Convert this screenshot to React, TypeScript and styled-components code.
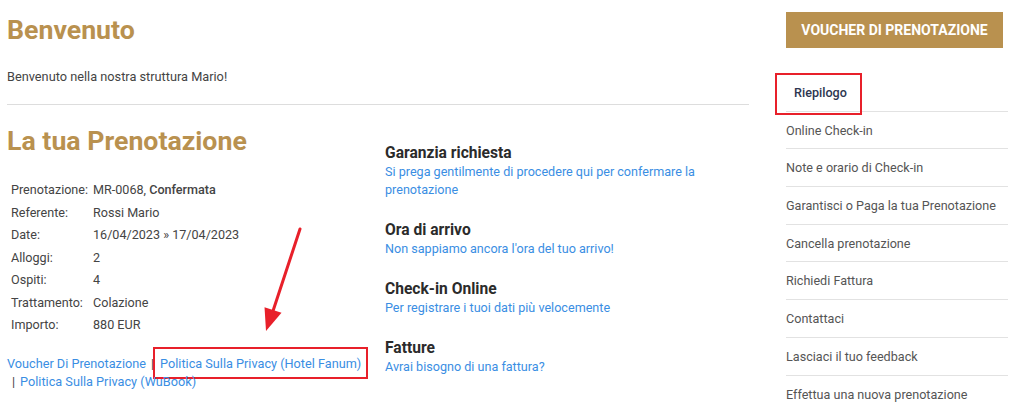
import React from "react";
import styled, { createGlobalStyle, css } from "styled-components";

const gold = "#b9914f";
const link = "#3a8ee3";
const annot = "#e8202a";

const GlobalStyle = createGlobalStyle`
  html, body {
    margin: 0;
    padding: 0;
    background: #fff;
    font-family: Roboto, "Liberation Sans", Arial, sans-serif;
    color: #444;
  }
`;

const Page = styled.div`
  position: relative;
  display: flex;
  align-items: flex-start;
  gap: 37px;
  padding: 12px 12px 0 7px;
  width: 1020px;
  height: 417px;
  box-sizing: border-box;
  overflow: hidden;
`;

const Main = styled.div`
  width: 742px;
  flex: none;
`;

const Title = styled.h1`
  margin: 1px 0 0;
  font-size: 26.7px;
  line-height: 34px;
  font-weight: 700;
  color: ${gold};
`;

const Welcome = styled.p`
  margin: 22px 0 0;
  font-size: 12.75px;
  line-height: 16px;
  color: #444;
`;

const Divider = styled.hr`
  margin: 19px 0 0;
  border: 0;
  border-top: 1px solid #ddd;
`;

const Columns = styled.div`
  display: grid;
  grid-template-columns: 378px 1fr;
`;

const Booking = styled.div`
  padding-top: 18px;
`;

const DetailTable = styled.table`
  margin: 21px 0 0 4px;
  border-collapse: collapse;
  font-size: 12.6px;
  color: #444;

  td {
    padding: 0;
    height: 22.5px;
    line-height: 22.5px;
    white-space: nowrap;
  }
  td:first-child {
    width: 82px;
  }
`;

const Strong = styled.span`
  font-weight: 500;
`;

const Links = styled.div`
  margin-top: 18px;
  font-size: 12.7px;
  line-height: 18px;
  color: #444;
`;

const Sep = styled.span<{ $lead?: boolean }>`
  margin: ${(p) => (p.$lead ? "0 5px 0 5px" : "0 6px 0 5px")};
`;

const A = styled.a<{ $marked?: boolean }>`
  position: relative;
  color: ${link};
  text-decoration: none;
  ${(p) =>
    p.$marked &&
    css`
      &::after {
        content: "";
        position: absolute;
        left: -7px;
        right: -7px;
        top: -9px;
        bottom: -8px;
        border: 2px solid ${annot};
      }
    `}
`;

const Actions = styled.div`
  padding-top: 38px;
`;

const Action = styled.div`
  margin-bottom: 21px;
`;

const ActionTitle = styled.h3`
  margin: 0;
  font-size: 15.6px;
  line-height: 20px;
  font-weight: 700;
  color: #2b2b2b;
`;

const ActionText = styled.a`
  display: block;
  font-size: 12.6px;
  line-height: 18px;
  color: ${link};
  text-decoration: none;
  width: 330px;
`;

const Sidebar = styled.aside`
  width: 222px;
  flex: none;
`;

const VoucherButton = styled.button`
  display: block;
  width: 217px;
  height: 36px;
  border: 0;
  background: ${gold};
  color: #fff;
  font-family: Roboto, "Liberation Sans", Arial, sans-serif;
  font-size: 14px;
  font-weight: 700;
  text-transform: uppercase;
  cursor: pointer;
`;

const Menu = styled.ul`
  list-style: none;
  margin: 26px 0 0;
  padding: 0;
`;

const MenuItem = styled.li<{ $active?: boolean }>`
  position: relative;
  display: flex;
  align-items: center;
  height: 37.7px;
  box-sizing: border-box;
  font-size: 12.6px;
  color: #555;
  border-bottom: 1px solid #e2e2e2;
  &:last-child {
    border-bottom: 0;
  }
  ${(p) =>
    p.$active &&
    css`
      padding-left: 8px;
      color: #2d3650;
      font-weight: 500;
      &::after {
        content: "";
        position: absolute;
        left: -11px;
        top: -1px;
        width: 87px;
        height: 42px;
        box-sizing: border-box;
        border: 2px solid ${annot};
      }
    `}
`;

const Arrow = styled.svg`
  position: absolute;
  left: 255px;
  top: 225px;
  width: 55px;
  height: 110px;
  pointer-events: none;
`;

const details: [string, React.ReactNode][] = [
  ["Prenotazione:", <>MR-0068, <Strong>Confermata</Strong></>],
  ["Referente:", "Rossi Mario"],
  ["Date:", "16/04/2023 » 17/04/2023"],
  ["Alloggi:", "2"],
  ["Ospiti:", "4"],
  ["Trattamento:", "Colazione"],
  ["Importo:", "880 EUR"],
];

const actions = [
  {
    title: "Garanzia richiesta",
    text: "Si prega gentilmente di procedere qui per confermare la prenotazione",
  },
  { title: "Ora di arrivo", text: "Non sappiamo ancora l'ora del tuo arrivo!" },
  { title: "Check-in Online", text: "Per registrare i tuoi dati più velocemente" },
  { title: "Fatture", text: "Avrai bisogno di una fattura?" },
];

const menu = [
  "Riepilogo",
  "Online Check-in",
  "Note e orario di Check-in",
  "Garantisci o Paga la tua Prenotazione",
  "Cancella prenotazione",
  "Richiedi Fattura",
  "Contattaci",
  "Lasciaci il tuo feedback",
  "Effettua una nuova prenotazione",
];

export default function App() {
  return (
    <>
      <GlobalStyle />
      <Page>
        <Main>
          <Title>Benvenuto</Title>
          <Welcome>Benvenuto nella nostra struttura Mario!</Welcome>
          <Divider />
          <Columns>
            <Booking>
              <Title>La tua Prenotazione</Title>
              <DetailTable>
                <tbody>
                  {details.map(([label, value]) => (
                    <tr key={label}>
                      <td>{label}</td>
                      <td>{value}</td>
                    </tr>
                  ))}
                </tbody>
              </DetailTable>
              <Links>
                <A href="#">Voucher Di Prenotazione</A>
                <Sep>|</Sep>
                <A href="#" $marked>
                  Politica Sulla Privacy (Hotel Fanum)
                </A>
                <br />
                <Sep $lead>|</Sep>
                <A href="#">Politica Sulla Privacy (WuBook)</A>
              </Links>
            </Booking>
            <Actions>
              {actions.map((a) => (
                <Action key={a.title}>
                  <ActionTitle>{a.title}</ActionTitle>
                  <ActionText href="#">{a.text}</ActionText>
                </Action>
              ))}
            </Actions>
          </Columns>
        </Main>
        <Sidebar>
          <VoucherButton>Voucher di prenotazione</VoucherButton>
          <Menu>
            {menu.map((m, i) => (
              <MenuItem key={m} $active={i === 0}>
                {m}
              </MenuItem>
            ))}
          </Menu>
        </Sidebar>
        <Arrow viewBox="0 0 55 110">
          <line x1="45" y1="4" x2="18" y2="86" stroke={annot} strokeWidth="3" strokeLinecap="round" />
          <polygon points="11,106 26.5,87.8 9.5,82.2" fill={annot} />
        </Arrow>
      </Page>
    </>
  );
}
